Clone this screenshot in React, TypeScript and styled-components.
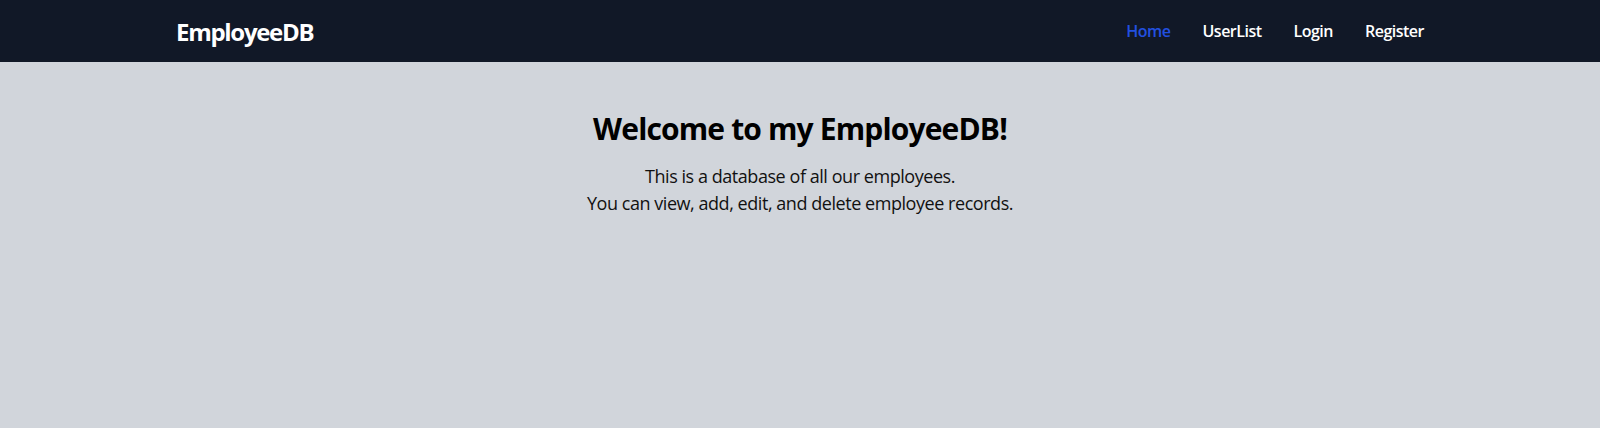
import styled, { createGlobalStyle } from "styled-components";

const GlobalStyle = createGlobalStyle`
  body {
    margin: 0;
    background-color: #d1d5db;
    font-family: "Open Sans", "Noto Sans", sans-serif;
    color: #111827;
  }
`;

const links = ["Home", "UserList", "Login", "Register"];

const App = () => {
  return (
    <>
      <GlobalStyle />
      <NavBar>
        <NavInner>
          <Logo>EmployeeDB</Logo>
          <NavList>
            {links.map((link, i) => (
              <NavLink key={link} $active={i === 0}>
                {link}
              </NavLink>
            ))}
          </NavList>
        </NavInner>
      </NavBar>
      <Main>
        <Title>Welcome to my EmployeeDB!</Title>
        <Text>
          This is a database of all our employees.
          <br />
          You can view, add, edit, and delete employee records.
        </Text>
      </Main>
    </>
  );
};

const NavBar = styled.nav`
  width: 100%;
  height: 62px;
  background-color: #111827;
`;

const NavInner = styled.div`
  max-width: 1280px;
  height: 100%;
  margin: 0 auto;
  padding: 0 16px;
  box-sizing: border-box;
  display: flex;
  align-items: center;
  justify-content: space-between;
`;

const Logo = styled.div`
  color: #ffffff;
  font-size: 24px;
  font-weight: 700;
  letter-spacing: -1.3px;
`;

const NavList = styled.div`
  display: flex;
  align-items: center;
  gap: 32px;
  padding-bottom: 1px;
`;

const NavLink = styled.a<{ $active: boolean }>`
  font-size: 16px;
  font-weight: 600;
  letter-spacing: -0.5px;
  color: ${(props) => (props.$active ? "#2250e0" : "#ffffff")};
  cursor: pointer;
`;

const Main = styled.main`
  padding-top: 49px;
  text-align: center;
`;

const Title = styled.h1`
  margin: 0 0 16px;
  font-size: 30px;
  line-height: 36px;
  font-weight: 700;
  letter-spacing: -0.85px;
  color: #000000;
`;

const Text = styled.p`
  margin: 0;
  font-size: 18px;
  line-height: 27px;
  letter-spacing: -0.45px;
  color: #111111;
`;

export default App;
